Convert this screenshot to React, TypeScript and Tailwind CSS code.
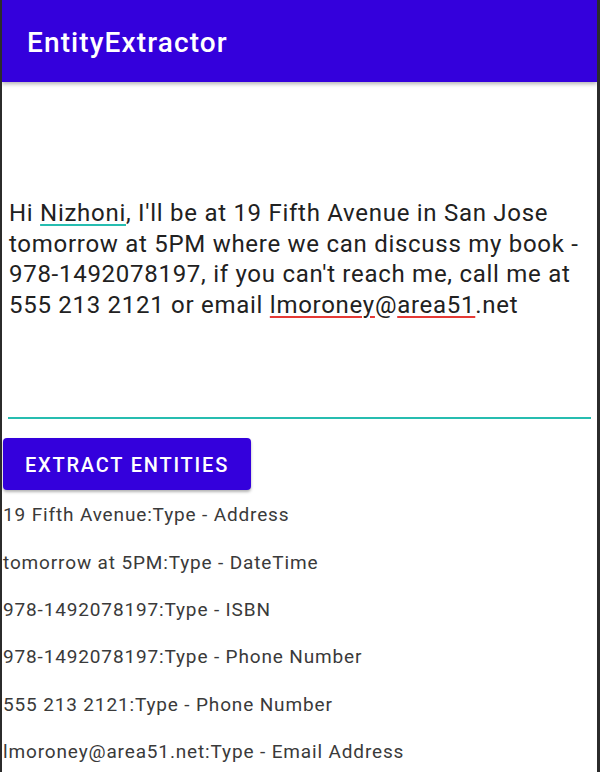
const results = [
  "19 Fifth Avenue:Type - Address",
  "tomorrow at 5PM:Type - DateTime",
  "978-1492078197:Type - ISBN",
  "978-1492078197:Type - Phone Number",
  "555 213 2121:Type - Phone Number",
  "lmoroney@area51.net:Type - Email Address",
];

export default function App() {
  return (
    <div
      className="flex h-[772px] w-[600px] flex-col overflow-hidden border-l-2 border-r-[3px] border-[#2b2b2b] bg-white"
      style={{ fontFamily: "Roboto, 'Liberation Sans', sans-serif" }}
    >
      <header className="relative z-10 flex h-[82px] shrink-0 items-center bg-[#3400dc] pl-[25px] pt-[4px] shadow-[0_2px_4px_rgba(0,0,0,0.3)]">
        <h1 className="text-[28px] font-medium leading-none tracking-[0.04em] text-white">EntityExtractor</h1>
      </header>

      <div className="mx-[6px] flex h-[337px] shrink-0 flex-col justify-center border-b-2 border-[#26bdb0] pl-[1px] pt-[19px]">
        <p className="text-[24px] leading-[30.5px] tracking-[0.03em] text-[#212121]">
          Hi{" "}
          <span className="underline decoration-[#26bdb0] decoration-2 underline-offset-[3px]">Nizhoni</span>, I'll be at
          19 Fifth Avenue in San Jose tomorrow at 5PM where we can discuss my book - 978-1492078197, if you can't reach
          me, call me at 555 213 2121 or email{" "}
          <span className="underline decoration-[#e53935] decoration-2 underline-offset-[3px]">lmoroney</span>@
          <span className="underline decoration-[#e53935] decoration-2 underline-offset-[3px]">area51</span>.net
        </p>
      </div>

      <div className="mt-[19px] pl-[1px]">
        <button className="flex h-[52px] w-[248px] items-center justify-center rounded-[4px] bg-[#3400dc] pt-[2px] text-[20px] font-medium tracking-[0.09em] text-white shadow-[0_2px_3px_rgba(0,0,0,0.3)]">
          EXTRACT ENTITIES
        </button>
      </div>

      <ul className="mt-[2px] flex flex-col pl-[1px]">
        {results.map((r, i) => (
          <li key={i} className="flex h-[47.3px] items-center text-[19px] tracking-[0.045em] text-[#3a3a3a]">
            {r}
          </li>
        ))}
      </ul>
    </div>
  );
}
